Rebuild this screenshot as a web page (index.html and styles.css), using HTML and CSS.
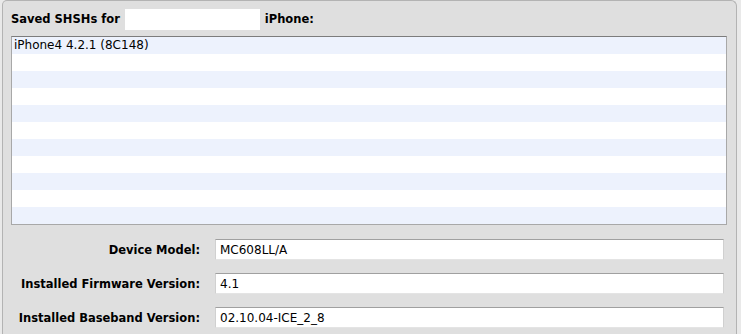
FILE: index.html
```html
<!DOCTYPE html>
<html>
<head>
  <title>Saved SHSHs</title>
  <link rel="stylesheet" href="styles.css">
</head>
<body>

  <div class="panel">
    <div class="title-row">
      <span class="title">Saved SHSHs for</span>
      <span class="name-field"></span>
      <span class="title">iPhone:</span>
    </div>

    <div class="shsh-list">
      <div class="row">iPhone4 4.2.1 (8C148)</div>
      <div class="row"></div>
      <div class="row"></div>
      <div class="row"></div>
      <div class="row"></div>
      <div class="row"></div>
      <div class="row"></div>
      <div class="row"></div>
      <div class="row"></div>
      <div class="row"></div>
      <div class="row"></div>
    </div>

    <div class="info">
      <div class="field-row">
        <span class="label">Device Model:</span>
        <span class="field">MC608LL/A</span>
      </div>
      <div class="field-row">
        <span class="label">Installed Firmware Version:</span>
        <span class="field">4.1</span>
      </div>
      <div class="field-row">
        <span class="label">Installed Baseband Version:</span>
        <span class="field">02.10.04-ICE_2_8</span>
      </div>
    </div>
  </div>

</body>
</html>
```

FILE: styles.css
```css
body {
  margin: 0;
  background-color: #e9e9e9;
  font-family: "DejaVu Sans", "Liberation Sans", sans-serif;
  font-size: 12px;
  color: #000;
  overflow: hidden;
}
.panel {
  margin-left: 2px;
  width: 735px;
  height: 334px;
  background-color: #dfdfdf;
  border: 1px solid #b3b3b3;
  border-bottom: 0;
  border-radius: 5px 6px 0 0;
  padding: 7px 0 0 8px;
  box-sizing: border-box;
}
.title-row {
  display: flex;
  align-items: center;
  height: 22px;
}
.title {
  font-weight: bold;
  font-size: 11.5px;
}
.name-field {
  width: 135px;
  height: 21px;
  background: #fff;
  margin: 0 5px 0 5px;
}
.shsh-list {
  margin-top: 6px;
  width: 716px;
  border: 1px solid #a8a8a8;
  border-top-color: #7c7c7c;
  box-sizing: border-box;
  background: #fff;
}
.row {
  height: 17px;
  line-height: 17px;
  padding-left: 2px;
}
.row:nth-child(odd) {
  background-color: #edf2fd;
}
.info {
  margin-top: 14px;
  display: flex;
  flex-direction: column;
  gap: 13px;
}
.field-row {
  display: flex;
  align-items: center;
}
.label {
  width: 189px;
  text-align: right;
  font-weight: bold;
  font-size: 11.5px;
  margin-right: 15px;
}
.field {
  width: 509px;
  height: 21px;
  line-height: 20px;
  box-sizing: border-box;
  background: #fff;
  border-top: 1px solid #a0a0a0;
  border-left: 1px solid #d0d0d0;
  border-right: 1px solid #d0d0d0;
  border-bottom: 1px solid #e4e4e4;
  padding-left: 4px;
}
```
